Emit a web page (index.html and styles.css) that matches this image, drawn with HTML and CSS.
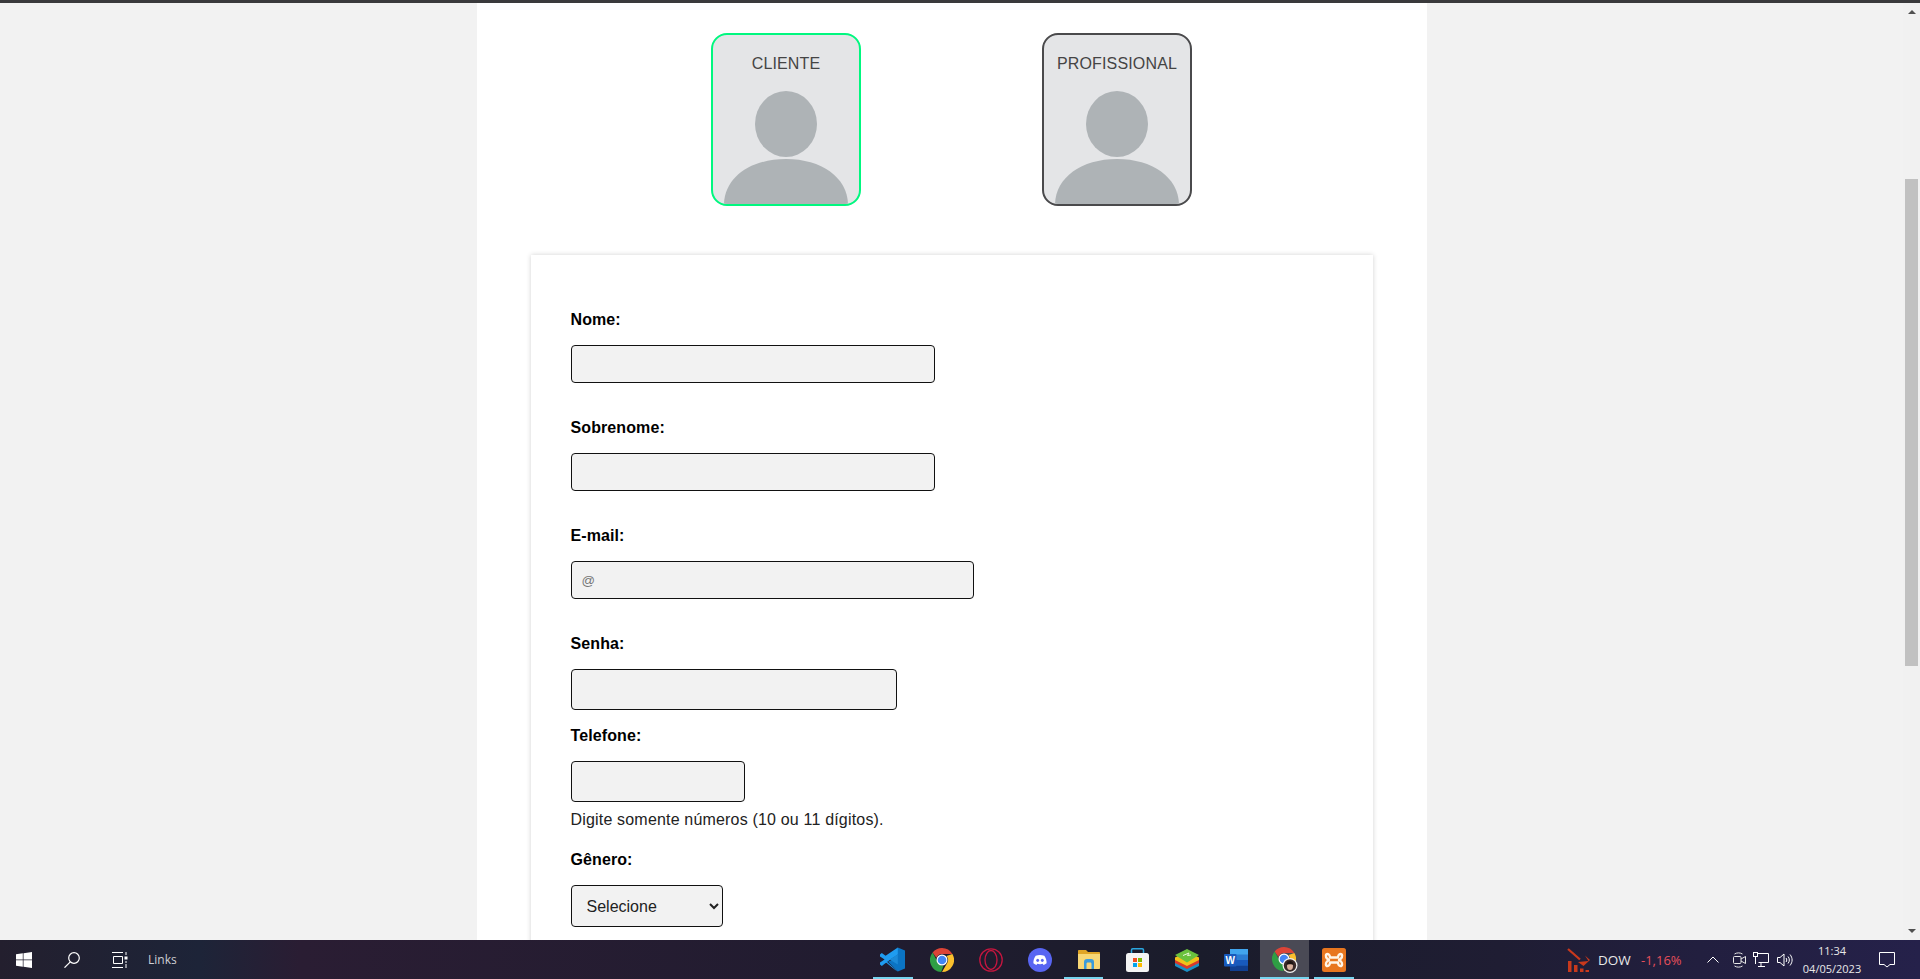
FILE: index.html
```html
<!DOCTYPE html>
<html lang="pt-BR">
<head>
    <meta charset="UTF-8">
    <meta name="viewport" content="width=device-width, initial-scale=1.0">
    <title>Cadastro</title>
    <link rel="stylesheet" href="styles.css">
</head>
<body>
    <svg class="sprites" width="0" height="0">
        <symbol id="person" viewBox="0 0 124 114">
            <ellipse cx="62" cy="33" rx="31" ry="33"/>
            <path d="M0 114C0 87 26 68 62 68S124 87 124 114Z"/>
        </symbol>
        <symbol id="chrome" viewBox="0 0 24 24">
            <path fill="#db4437" d="M12 0a12 12 0 0 1 10.4 6H12a6 6 0 0 0-5.6 3.8L2.6 4.6A12 12 0 0 1 12 0z"/>
            <path fill="#fbc02d" d="M22.400 6A12 12 0 0 1 12 24l5.200-9A6 6 0 0 0 16.500 8z"/>
            <path fill="#2f9e44" d="M2.600 4.600 7 12.800A6 6 0 0 0 13.500 17.800L11.200 24A12 12 0 0 1 2.600 4.600z"/>
            <circle cx="12" cy="12" r="5.500" fill="#fff"/>
            <circle cx="12" cy="12" r="4.300" fill="#4285f4"/>
        </symbol>
    </svg>

    <div class="top-line"></div>

    <div class="viewport">
        <div class="page">
            <main class="content">
                <div class="account-types">
                    <div class="account-card selected">
                        <span>CLIENTE</span>
                        <svg class="avatar"><use href="#person"/></svg>
                    </div>
                    <div class="account-card">
                        <span>PROFISSIONAL</span>
                        <svg class="avatar"><use href="#person"/></svg>
                    </div>
                </div>

                <form class="signup-form">
                    <div class="field">
                        <label for="nome">Nome:</label>
                        <input class="input input-name" id="nome" type="text">
                    </div>
                    <div class="field">
                        <label for="sobrenome">Sobrenome:</label>
                        <input class="input input-name" id="sobrenome" type="text">
                    </div>
                    <div class="field">
                        <label for="email">E-mail:</label>
                        <input class="input input-email" id="email" type="text" placeholder="@">
                    </div>
                    <div class="field field-tight">
                        <label for="senha">Senha:</label>
                        <input class="input input-pass" id="senha" type="password">
                    </div>
                    <div class="field field-hint">
                        <label for="telefone">Telefone:</label>
                        <input class="input input-phone" id="telefone" type="text">
                        <p class="hint">Digite somente números (10 ou 11 dígitos).</p>
                    </div>
                    <div class="field">
                        <label for="genero">Gênero:</label>
                        <select class="input input-select" id="genero">
                            <option>Selecione</option>
                            <option>Feminino</option>
                            <option>Masculino</option>
                        </select>
                    </div>
                </form>
            </main>
        </div>

        <div class="scrollbar">
            <div class="arrow-up"></div>
            <div class="thumb"></div>
            <div class="arrow-down"></div>
        </div>
    </div>

    <footer class="taskbar">
        <div class="tb-left">
            <div class="tb-slot">
                <svg width="16" height="16" viewBox="0 0 16 16" fill="#fff"><path d="M0 2.300 6.800 1.300V7.600H0ZM7.500 1.200 16 0V7.600H7.500ZM0 8.300H6.800V14.700L0 13.700ZM7.500 8.300H16V16L7.500 14.800Z"/></svg>
            </div>
            <div class="tb-slot">
                <svg width="16" height="16" viewBox="0 0 16 16" fill="none" stroke="#fff" stroke-width="1.200"><circle cx="10" cy="6" r="5.300"/><path d="M6.300 9.800 .5 15.700"/></svg>
            </div>
            <div class="tb-slot">
                <svg width="16" height="16" viewBox="0 0 16 16" fill="none" stroke="#fff"><path d="M0 .5H11M1.500 4.500H10.500V11.500H1.500ZM0 15.500H11M14 0V3M14 12V16"/><rect x="12.500" y="4.500" width="3" height="3" fill="#fff" stroke="none"/><path d="M14 9V11"/></svg>
            </div>
            <span class="tb-links">Links</span>
        </div>

        <div class="tb-apps">
            <div class="tb-app running">
                <svg width="25" height="25" viewBox="0 0 25 25"><path fill="#0b74c4" d="M17.800.6 25 3.600V21.400L17.800 24.500 8 14.800 12.800 12.500Z"/><path fill="#1f9cf0" d="M17.800.6V7.200L5 16.600 1.800 19 0 17.400V15.500L4.600 12.500 0 9.500V7.600L1.800 6 5.600 8.800Z"/><path fill="#1b8ad8" d="M17.800 7.500V17.500L9.600 12.500Z"/><path fill="#1f9cf0" d="M5 13 17.800 24.500 15 22.700 4.800 14.500Z"/></svg>
            </div>
            <div class="tb-app">
                <svg width="24" height="24"><use href="#chrome"/></svg>
            </div>
            <div class="tb-app">
                <svg width="24" height="24" viewBox="0 0 24 24" fill="none" stroke="#c4163f" stroke-width="1.300"><circle cx="12" cy="12" r="11.200"/><ellipse cx="12" cy="12" rx="6" ry="9.500"/></svg>
            </div>
            <div class="tb-app">
                <svg width="24" height="24" viewBox="0 0 24 24"><circle cx="12" cy="12" r="12" fill="#5865f2"/><path fill="#fff" d="M7.700 7.800C10.500 6.800 13.500 6.800 16.300 7.800 17.900 10 18.700 12.500 18.600 15.300 17.600 16 16.600 16.500 15.500 16.900L14.800 15.700C13 16.300 11 16.300 9.200 15.700L8.500 16.900C7.400 16.500 6.400 16 5.400 15.300 5.300 12.500 6.100 10 7.700 7.800Z"/><ellipse cx="9.700" cy="12.300" rx="1.400" ry="1.600" fill="#5865f2"/><ellipse cx="14.300" cy="12.300" rx="1.400" ry="1.600" fill="#5865f2"/></svg>
            </div>
            <div class="tb-app running-wide">
                <svg width="22" height="20" viewBox="0 0 22 20"><path fill="#e0a526" d="M0 1C0 .4.400 0 1 0H8L10 2H21C21.600 2 22 2.400 22 3V5H0Z"/><path fill="#f8d775" d="M0 4H22V18C22 18.600 21.600 19 21 19H1C.4 19 0 18.600 0 18Z"/><path fill="#3a9bdc" d="M6 12C6 10 7 9 9 9H13C15 9 16 10 16 12V19H13.500V14C13.500 13 13 12.500 12.500 12.500H9.500C9 12.500 8.500 13 8.500 14V19H6Z"/></svg>
            </div>
            <div class="tb-app">
                <svg width="23" height="24" viewBox="0 0 23 24"><path fill="none" stroke="#2ba7e0" stroke-width="1.500" d="M5.500 6V2C5.500 1.200 6 .8 6.800.8H16.200C17 .8 17.500 1.200 17.500 2V6"/><rect y="5" width="23" height="19" rx="2.500" fill="#f4f4f4"/><rect x="7" y="10" width="4" height="4" fill="#f25022"/><rect x="12" y="10" width="4" height="4" fill="#7fba00"/><rect x="7" y="15" width="4" height="4" fill="#00a4ef"/><rect x="12" y="15" width="4" height="4" fill="#ffb900"/></svg>
            </div>
            <div class="tb-app">
                <svg width="24" height="24" viewBox="0 0 24 24"><path fill="#1b8fc4" d="M0 15 12 9 24 15V18L12 24 0 18Z"/><path fill="#d93a2b" d="M0 12 12 6 24 12V15L12 21 0 15Z"/><path fill="#f2c21a" d="M0 9.500 12 3.500 24 9.500V12L12 18 0 12Z"/><path fill="#6ac23d" d="M0 7 12 1 24 7 12 14.500Z"/><path fill="none" stroke="#e9f7d8" stroke-width="1" d="M8 7.500 14 5 12.500 7.500 16 7"/></svg>
            </div>
            <div class="tb-app">
                <svg width="24" height="24" viewBox="0 0 24 24"><rect x="6" y="1" width="18" height="22" rx="1" fill="#2b7cd3"/><rect x="6" y="1" width="18" height="5.500" fill="#41a5ee"/><rect x="6" y="12" width="18" height="5.500" fill="#185abd"/><rect x="6" y="17.500" width="18" height="5.500" fill="#103f91"/><rect y="6" width="12.500" height="12.500" rx="1" fill="#185abd"/><text class="word-w" x="6.200" y="16">W</text></svg>
            </div>
            <div class="tb-app active">
                <svg width="26" height="26" viewBox="0 0 26 26"><use href="#chrome" width="24" height="24"/><circle cx="18" cy="18.500" r="7.500" fill="#f2f2f2"/><circle cx="18" cy="18.500" r="6.200" fill="#3a2a28"/><ellipse cx="18" cy="19" rx="3" ry="4" fill="#d8b09c"/><path fill="#1d1413" d="M14.500 18C14.500 15 16 14 18 14S21.500 15 21.500 18C20 17 16 17 14.500 18Z"/></svg>
            </div>
            <div class="tb-app running">
                <svg width="24" height="24" viewBox="0 0 24 24"><rect width="24" height="24" rx="2.500" fill="#e8761f"/><path fill="none" stroke="#fff5e8" stroke-width="2.400" stroke-linejoin="round" d="M8 9.500C8 8 7 6 5.500 6 3.500 6 3.500 9 5 10.500L7 12 5 13.500C3.500 15 3.500 18 5.500 18 7 18 8 16 8 14.500H16C16 16 17 18 18.500 18 20.500 18 20.500 15 19 13.500L17 12 19 10.500C20.500 9 20.500 6 18.500 6 17 6 16 8 16 9.500Z"/></svg>
            </div>
        </div>

        <div class="tb-tray">
            <svg class="tray-dow" width="23" height="24" viewBox="0 0 23 24"><path fill="none" stroke="#c9391c" stroke-width="2.300" d="M1 1 13 11.500"/><path fill="#c9391c" d="M11 14 21.500 13 18 7.500 23 12 16.500 18ZM1 13H4.500V24H1ZM7 17H10.500V24H7ZM13 20.500H16.500V24H13ZM18.500 22H22V24H18.500Z"/></svg>
            <span class="tray-name">DOW</span>
            <span class="tray-change">-1,16%</span>
            <svg class="tray-chevron" width="12" height="7" viewBox="0 0 12 7" fill="none" stroke="#fff"><path d="M.5 6.500 6 1 11.500 6.500"/></svg>
            <svg class="tray-meet" width="13" height="16" viewBox="0 0 13 16" fill="none" stroke="#e8e8e8"><path d="M1.500 2C4 .5 7 .5 9.500 2M1.500 14C4 15.500 7 15.500 9.500 14"/><rect x=".5" y="4.500" width="7.500" height="7" rx="1"/><path d="M8 7 12.500 4.500V11.500L8 9"/></svg>
            <svg class="tray-net" width="16" height="15" viewBox="0 0 16 15" fill="none" stroke="#fff"><path d="M4.500 1.500H15.500V10.500H5.500M8 10.500V14.500M5 14.500H12"/><rect x=".5" y=".5" width="4" height="4"/><path d="M2.500 4.500V12"/></svg>
            <svg class="tray-vol" width="16" height="14" viewBox="0 0 16 14" fill="none" stroke="#fff"><path d="M.5 4.500H3L7 1V13L3 9.500H.5Z"/><path d="M9 5C10 6.300 10 7.700 9 9M11 3.500C12.800 5.500 12.800 8.500 11 10.500M13 1.500C15.800 5 15.800 9 13 12.500"/></svg>
            <div class="tray-clock">
                <span>11:34</span>
                <span>04/05/2023</span>
            </div>
            <svg class="tray-notif" width="16" height="16" viewBox="0 0 16 16" fill="none" stroke="#fff"><path d="M.5 .5H15.500V12.500H11L8 15 5 12.500H.5Z"/></svg>
        </div>
    </footer>
</body>
</html>
```

FILE: styles.css
```css
* {
    box-sizing: border-box;
}
html, body {
    height: 100%;
}
body {
    margin: 0;
    display: flex;
    flex-direction: column;
    overflow: hidden;
    background: #f2f2f2;
    font-family: "Liberation Sans", Arial, sans-serif;
    font-size: 16px;
}
.sprites {
    position: absolute;
}
.top-line {
    height: 3px;
    flex: none;
    background: #3a3a3c;
}

/* page + scrollbar */
.viewport {
    flex: 1;
    min-height: 0;
    display: flex;
    overflow: hidden;
}
.page {
    flex: 1;
    min-width: 0;
    display: flex;
    justify-content: center;
}
.content {
    width: 950px;
    height: 1100px;
    padding-top: 30px;
    background: #fff;
}
.scrollbar {
    width: 17px;
    flex: none;
    display: flex;
    flex-direction: column;
    align-items: center;
    background: #f1f1f1;
}
.arrow-up {
    margin-top: 7px;
    border-left: 4px solid transparent;
    border-right: 4px solid transparent;
    border-bottom: 4px solid #505050;
}
.thumb {
    width: 13px;
    height: 487px;
    margin-top: 165px;
    background: #c1c1c1;
}
.arrow-down {
    margin-top: 263px;
    border-left: 4px solid transparent;
    border-right: 4px solid transparent;
    border-top: 4px solid #505050;
}

/* tipo de conta */
.account-types {
    display: flex;
    justify-content: center;
    gap: 181px;
}
.account-card {
    width: 150px;
    height: 173px;
    padding-top: 20px;
    border: 2px solid #4a4a4c;
    border-radius: 16px;
    background: #e4e5e7;
    color: #444;
    text-align: center;
    line-height: 18px;
    letter-spacing: 0.15px;
    overflow: hidden;
}
.account-card span {
    display: block;
}
.account-card.selected {
    border-color: #00f77f;
}
.avatar {
    display: block;
    width: 124px;
    height: 114px;
    margin: 18px auto 0;
    fill: #aeb3b6;
}

/* formulario */
.signup-form {
    width: 842px;
    margin: 49px auto 0;
    padding: 56px 40px 60px;
    background: #fff;
    box-shadow: 0 0 5px rgba(0, 0, 0, 0.18);
}
.field {
    margin-bottom: 36px;
}
.field-tight {
    margin-bottom: 17px;
}
.field-hint {
    margin-bottom: 22px;
}
.field label {
    display: block;
    margin-bottom: 16px;
    line-height: 18px;
    font-weight: bold;
    letter-spacing: 0.1px;
    color: #000;
}
.input {
    display: block;
    height: 38px;
    padding: 0 10px;
    border: 1px solid #111;
    border-radius: 4px;
    background: #f2f2f2;
    font-family: "Liberation Sans", Arial, sans-serif;
}
.input-name {
    width: 364px;
}
.input-email {
    width: 403px;
}
.input-pass {
    width: 326px;
    height: 41px;
}
.input-phone {
    width: 174px;
    height: 41px;
}
.input-select {
    width: 152px;
    height: 42px;
    padding-left: 11px;
    font-size: 16px;
    color: #222;
}
.hint {
    margin: 9px 0 0;
    line-height: 18px;
    letter-spacing: 0.18px;
    color: #222;
}

/* barra de tarefas */
.taskbar {
    height: 39px;
    flex: none;
    display: flex;
    align-items: center;
    background: linear-gradient(90deg, #231f2e 0, #1d2438 200px, #2a1d33 300px, #211c30 860px, #1a1c2b 1200px, #1f1d33 1500px, #221f3f 1700px, #25214a 100%);
    color: #fff;
    font-family: "Open Sans", sans-serif;
}
.tb-left {
    width: 868px;
    flex: none;
    display: flex;
    align-items: center;
}
.tb-slot {
    width: 48px;
    display: flex;
    justify-content: center;
}
.tb-slot svg {
    display: block;
}
.tb-links {
    margin-left: 4px;
    font-size: 12px;
    color: #cfcfd4;
}
.tb-apps {
    width: 490px;
    flex: none;
    display: flex;
}
.tb-app {
    width: 49px;
    height: 39px;
    display: flex;
    align-items: center;
    justify-content: center;
    position: relative;
}
.tb-app.running::after,
.tb-app.running-wide::after,
.tb-app.active::after {
    content: "";
    position: absolute;
    bottom: 0;
    left: 5px;
    width: 40px;
    height: 2px;
    background: #76d4ee;
}
.tb-app.running-wide::after {
    left: 0;
    width: 39px;
}
.tb-app.active {
    background: #4a4a55;
}
.tb-app.active::after {
    left: 0;
    width: 100%;
}
.word-w {
    font-family: "Liberation Sans", sans-serif;
    font-size: 10px;
    font-weight: bold;
    fill: #fff;
    text-anchor: middle;
}
.tb-tray {
    flex: 1;
    display: flex;
    align-items: center;
    justify-content: flex-end;
}
.tray-name {
    width: 33px;
    margin-left: 8px;
    font-size: 13.5px;
    color: #e8e8e8;
}
.tray-change {
    width: 42px;
    margin-left: 10px;
    font-size: 13px;
    white-space: nowrap;
    color: #e8505b;
}
.tray-chevron {
    margin-left: 24px;
}
.tray-meet {
    margin-left: 14px;
}
.tray-net {
    margin-left: 7px;
}
.tray-vol {
    margin-left: 8px;
}
.tray-clock {
    width: 58px;
    margin-left: 10px;
    display: flex;
    flex-direction: column;
    align-items: center;
    gap: 3px;
    font-size: 11px;
    line-height: 15px;
    color: #e8e8e8;
}
.tray-notif {
    margin-left: 18px;
    margin-right: 25px;
}
```
